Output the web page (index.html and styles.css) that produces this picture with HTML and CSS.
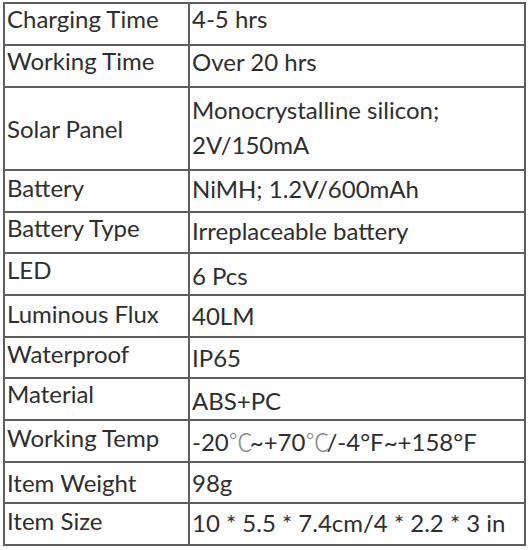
FILE: index.html
```html
<!DOCTYPE html>
<html>
<head>
<meta charset="utf-8">
<link rel="stylesheet" href="styles.css">
</head>
<body>
<div class="spec">
  <div class="k p0">Charging Time</div><div class="v p0">4-5 hrs</div>
  <div class="k p0">Working Time</div><div class="v p1">Over 20 hrs</div>
  <div class="k tall">Solar Panel</div><div class="v two">Monocrystalline silicon;<br>2V/150mA</div>
  <div class="k p2">Battery</div><div class="v p3">NiMH; 1.2V/600mAh</div>
  <div class="k p0">Battery Type</div><div class="v p3">Irreplaceable battery</div>
  <div class="k p1">LED</div><div class="v p7">6 Pcs</div>
  <div class="k p3">Luminous Flux</div><div class="v p5">40LM</div>
  <div class="k p1">Waterproof</div><div class="v p5">IP65</div>
  <div class="k p0">Material</div><div class="v p7">ABS+PC</div>
  <div class="k p2">Working Temp</div><div class="v p5">-20<span class="cel">℃</span>~+70<span class="cel">℃</span>/-4°F~+158°F</div>
  <div class="k p5">Item Weight</div><div class="v p5">98g</div>
  <div class="k p2">Item Size</div><div class="v p4">10 * 5.5 * 7.4cm/4 * 2.2 * 3 in</div>
</div>
</body>
</html>
```
FILE: styles.css
```css
html, body {
  margin: 0;
  padding: 0;
  background: #fff;
}
.spec {
  margin: 2px 0 0 3px;
  width: 523px;
  box-sizing: border-box;
  padding: 2px;
  background: #5e5e5e;
  display: grid;
  grid-template-columns: 183px 1fr;
  grid-template-rows: 40px 40px 81px 40px 39px 40px 40px 39px 40px 40px 39px 40px;
  gap: 2px;
  font-family: "Lato", "Open Sans", sans-serif;
  font-size: 24px;
  color: #2e2e2e;
  line-height: 29px;
}
.k, .v {
  background: #fff;
  white-space: nowrap;
  overflow: hidden;
}
.k { padding-left: 2px; }
.v { padding-left: 2px; }
.p0 { padding-top: 0; }
.p1 { padding-top: 1px; }
.p2 { padding-top: 2px; }
.p3 { padding-top: 3px; }
.p4 { padding-top: 4px; }
.p5 { padding-top: 5px; }
.p7 { padding-top: 7px; }
.tall { padding-top: 26px; }
.two { line-height: 35px; padding-top: 4px; }
.cel {
  font-family: "Noto Sans CJK SC", sans-serif;
  font-weight: 200;
  font-size: 24px;
  letter-spacing: -3px;
  color: #8a8a8a;
}
```
